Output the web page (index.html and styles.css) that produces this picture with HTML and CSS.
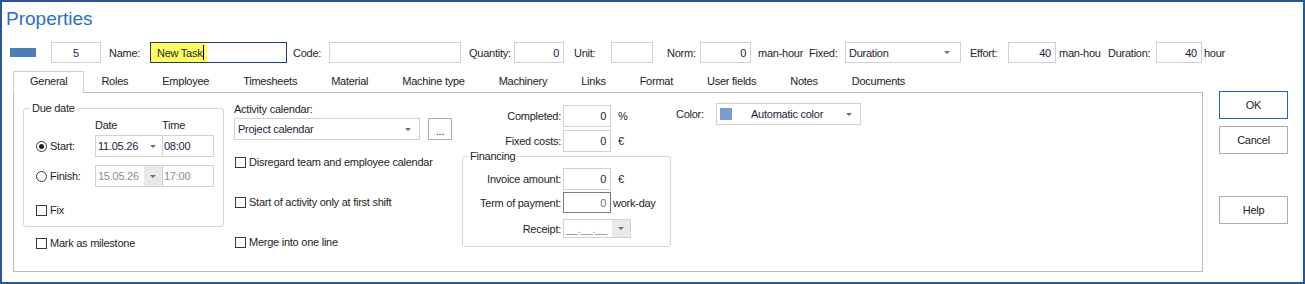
FILE: index.html
```html
<!DOCTYPE html>
<html lang="en">
  <head>
    <meta charset="UTF-8" />
    <title>Properties</title>
    <link rel="stylesheet" href="styles.css">
  </head>
  <body>
    <div class="window">
      <h1 class="title">Properties</h1>

      <!-- Header fields -->
      <div class="toprow">
        <span class="chip"></span>
        <div class="field num-box">5</div>
        <span class="lbl lbl-name">Name:</span>
        <div class="field name-box">
          <span class="selection">New Task<span class="caret"></span></span>
        </div>
        <span class="lbl lbl-code">Code:</span>
        <div class="field code-box"></div>
        <span class="lbl lbl-qty">Quantity:</span>
        <div class="field num qty-box">0</div>
        <span class="lbl lbl-unit">Unit:</span>
        <div class="field unit-box"></div>
        <span class="lbl lbl-norm">Norm:</span>
        <div class="field num norm-box">0</div>
        <span class="lbl lbl-manhour">man-hour</span>
        <span class="lbl lbl-fixed">Fixed:</span>
        <div class="field combo fixed-box">Duration<span class="arrow"></span></div>
        <span class="lbl lbl-effort">Effort:</span>
        <div class="field num effort-box">40</div>
        <span class="lbl lbl-manhou">man-hou</span>
        <span class="lbl lbl-duration">Duration:</span>
        <div class="field num dur-box">40</div>
        <span class="lbl lbl-hour">hour</span>
      </div>

      <div class="main">
        <div class="tabs-area">
          <div class="tabs">
            <span class="tab active">General</span>
            <span class="tab">Roles</span>
            <span class="tab">Employee</span>
            <span class="tab">Timesheets</span>
            <span class="tab">Material</span>
            <span class="tab">Machine type</span>
            <span class="tab">Machinery</span>
            <span class="tab">Links</span>
            <span class="tab">Format</span>
            <span class="tab">User fields</span>
            <span class="tab">Notes</span>
            <span class="tab">Documents</span>
          </div>

          <div class="panel">
            <!-- Due date -->
            <div class="col-due">
              <fieldset class="group due-group">
                <legend>Due date</legend>
                <div class="due-head"><span>Date</span><span>Time</span></div>
                <div class="due-row row-start">
                  <span class="radio-lbl"><span class="radio on"></span>Start:</span>
                  <div class="field date-box">11.05.26<span class="drop"><span class="arrow"></span></span></div>
                  <div class="field time-box">08:00</div>
                </div>
                <div class="due-row row-finish disabled">
                  <span class="radio-lbl"><span class="radio"></span>Finish:</span>
                  <div class="field date-box">15.05.26<span class="drop grey"><span class="arrow"></span></span></div>
                  <div class="field time-box">17:00</div>
                </div>
                <div class="check-row fix-row"><span class="check"></span>Fix</div>
              </fieldset>
              <div class="check-row milestone-row"><span class="check"></span>Mark as milestone</div>
            </div>

            <!-- Calendar -->
            <div class="col-cal">
              <div class="cal-title">Activity calendar:</div>
              <div class="cal-row">
                <div class="field combo cal-box">Project calendar<span class="arrow"></span></div>
                <span class="dots">...</span>
              </div>
              <div class="check-row cal-check first"><span class="check"></span>Disregard team and employee calendar</div>
              <div class="check-row cal-check"><span class="check"></span>Start of activity only at first shift</div>
              <div class="check-row cal-check"><span class="check"></span>Merge into one line</div>
            </div>

            <!-- Progress and financing -->
            <div class="col-fin">
              <div class="frow">
                <span class="flbl">Completed:</span>
                <div class="field num">0</div>
                <span class="unit">%</span>
              </div>
              <div class="frow row-costs">
                <span class="flbl">Fixed costs:</span>
                <div class="field num">0</div>
                <span class="unit">€</span>
              </div>
              <fieldset class="group fin-group">
                <legend>Financing</legend>
                <div class="frow row-invoice">
                  <span class="flbl">Invoice amount:</span>
                  <div class="field num">0</div>
                  <span class="unit">€</span>
                </div>
                <div class="frow row-term">
                  <span class="flbl">Term of payment:</span>
                  <div class="field num term-box">0</div>
                  <span class="unit unit-tight">work-day</span>
                </div>
                <div class="frow row-receipt">
                  <span class="flbl">Receipt:</span>
                  <div class="field receipt-box">__.__.__<span class="drop grey"><span class="arrow"></span></span></div>
                </div>
              </fieldset>
            </div>

            <!-- Colour -->
            <div class="col-color">
              <span class="color-lbl">Color:</span>
              <div class="field color-box">
                <span class="swatch"></span>
                <span class="color-name">Automatic color</span>
                <span class="arrow"></span>
              </div>
            </div>
          </div>
        </div>

        <div class="buttons">
          <button type="button" class="btn btn-default">OK</button>
          <button type="button" class="btn">Cancel</button>
          <button type="button" class="btn btn-help">Help</button>
        </div>
      </div>
    </div>
  </body>
</html>
```

FILE: styles.css
```css
body {
  margin: 0;
  font-family: "Liberation Sans", Arial, sans-serif;
  font-size: 11px;
  letter-spacing: -0.25px;
  color: #1e1e1e;
  background: #fff;
}
.window {
  box-sizing: border-box;
  width: 1305px;
  height: 284px;
  border: 2px solid #2b579a;
}
.title {
  margin: 0;
  padding: 6px 0 0 4px;
  height: 22px;
  font-size: 19px;
  font-weight: normal;
  line-height: 22px;
  letter-spacing: 0;
  color: #2a6fcf;
}

/* generic controls */
.field {
  box-sizing: border-box;
  height: 21px;
  border: 1px solid #d1d1d1;
  background: #fff;
  display: flex;
  align-items: center;
  padding: 0 3px;
  color: #1c1c3c;
  white-space: nowrap;
  overflow: hidden;
}
.num {
  justify-content: flex-end;
  padding-right: 4px;
}
.combo {
  justify-content: space-between;
  padding: 0 8px 0 3px;
}
.arrow {
  width: 0;
  height: 0;
  border-left: 3px solid transparent;
  border-right: 3px solid transparent;
  border-top: 3px solid #707070;
}
.drop {
  display: flex;
  align-items: center;
  justify-content: center;
  width: 18px;
  height: 100%;
  margin-left: auto;
}
.drop.grey {
  background: #e9e9e9;
}
.lbl {
  box-sizing: border-box;
  white-space: nowrap;
}
.check {
  box-sizing: border-box;
  width: 11px;
  height: 11px;
  border: 1px solid #3a3a3a;
  background: #fff;
}
.check-row {
  display: flex;
  align-items: center;
  gap: 3px;
  height: 13px;
  line-height: 13px;
}

/* top row */
.toprow {
  display: flex;
  align-items: center;
  height: 21px;
  margin-top: 12px;
  padding-left: 8px;
}
.chip {
  width: 26px;
  height: 9px;
  background: #4a7ebb;
}
.num-box {
  width: 50px;
  margin-left: 15px;
  justify-content: center;
}
.lbl-name {
  width: 49px;
  padding-left: 8px;
}
.name-box {
  width: 137px;
  padding: 0;
  border-color: #1f3c70;
}
.selection {
  display: flex;
  align-items: center;
  height: 100%;
  padding: 0 3px 0 6px;
  background: #ffff5e;
}
.caret {
  width: 1px;
  height: 15px;
  margin-left: 1px;
  background: #000;
}
.lbl-code {
  width: 42px;
  padding-left: 6px;
}
.code-box {
  width: 132px;
}
.lbl-qty {
  width: 53px;
  padding-left: 8px;
}
.qty-box {
  width: 50px;
}
.lbl-unit {
  width: 47px;
  padding-left: 10px;
}
.unit-box {
  width: 42px;
}
.lbl-norm {
  width: 47px;
  padding-left: 14px;
}
.norm-box {
  width: 51px;
}
.lbl-manhour {
  width: 58px;
  padding-left: 7px;
}
.lbl-fixed {
  width: 36px;
}
.fixed-box {
  width: 116px;
  padding-right: 10px;
}
.lbl-effort {
  width: 47px;
  padding-left: 9px;
}
.effort-box {
  width: 48px;
}
.lbl-manhou {
  width: 52px;
  padding-left: 3px;
}
.lbl-duration {
  width: 48px;
}
.dur-box {
  width: 46px;
}
.lbl-hour {
  padding-left: 2px;
}

/* tabs */
.main {
  display: flex;
  align-items: flex-start;
  margin-top: 8px;
  padding-left: 11px;
}
.tabs-area {
  width: 1190px;
}
.tabs {
  display: flex;
  align-items: flex-start;
  height: 21px;
}
.tab {
  box-sizing: border-box;
  height: 21px;
  padding: 0 16px;
  line-height: 19px;
  border: 1px solid transparent;
  border-bottom: none;
  color: #222;
  white-space: nowrap;
}
.tab.active {
  position: relative;
  z-index: 1;
  height: 22px;
  background: #fff;
  border-color: #cfcfcf;
}
.panel {
  box-sizing: border-box;
  height: 180px;
  border: 1px solid #b8b8b8;
  display: flex;
  align-items: flex-start;
}

/* group boxes */
.group {
  box-sizing: border-box;
  min-width: 0;
  margin: 0;
  padding: 0;
  border: 1px solid #d6d6d6;
  border-radius: 3px;
}
.group legend {
  padding: 0 2px;
  line-height: 11px;
}

/* due date column */
.col-due {
  width: 201px;
  margin: 10px 0 0 9px;
}
.due-group {
  padding-bottom: 9px;
}
.due-group legend {
  margin-left: 6px;
}
.due-head {
  display: flex;
  margin-top: 5px;
  padding-left: 71px;
  line-height: 13px;
}
.due-head span:first-child {
  width: 67px;
}
.due-row {
  display: flex;
  align-items: center;
  height: 22px;
}
.row-start {
  margin-top: 3px;
}
.row-finish {
  margin-top: 8px;
}
.radio-lbl {
  box-sizing: border-box;
  display: flex;
  align-items: center;
  gap: 3px;
  width: 71px;
  padding-left: 12px;
}
.radio {
  box-sizing: border-box;
  display: flex;
  align-items: center;
  justify-content: center;
  width: 11px;
  height: 11px;
  border: 1px solid #3a3a3a;
  border-radius: 50%;
}
.radio.on::after {
  content: "";
  width: 5px;
  height: 5px;
  border-radius: 50%;
  background: #1e1e1e;
}
.date-box {
  width: 68px;
  height: 22px;
  padding: 0 0 0 2px;
}
.time-box {
  width: 51px;
  height: 22px;
  border-left: none;
  padding-left: 1px;
}
.disabled .field {
  color: #8d8d8d;
}
.fix-row {
  margin-top: 17px;
  padding-left: 12px;
}
.milestone-row {
  margin-top: 10px;
  padding-left: 13px;
}

/* calendar column */
.col-cal {
  width: 218px;
  margin: 10px 0 0 10px;
}
.cal-title {
  line-height: 13px;
}
.cal-row {
  display: flex;
  margin-top: 2px;
}
.cal-box {
  width: 186px;
  height: 22px;
}
.dots {
  box-sizing: border-box;
  width: 24px;
  height: 22px;
  margin-left: 8px;
  border: 1px solid #adadad;
  text-align: center;
  line-height: 24px;
}
.cal-check {
  margin-top: 27px;
  padding-left: 1px;
}
.cal-check.first {
  margin-top: 16px;
}

/* completed / financing column */
.col-fin {
  width: 209px;
  margin: 12px 0 0 10px;
}
.frow {
  display: flex;
  align-items: center;
  height: 22px;
}
.flbl {
  box-sizing: border-box;
  width: 101px;
  padding-right: 2px;
  text-align: right;
  white-space: nowrap;
}
.frow .field {
  width: 48px;
  height: 22px;
}
.unit {
  margin-left: 7px;
}
.unit-tight {
  margin-left: 2px;
}
.row-costs {
  margin-top: 3px;
}
.fin-group {
  margin-top: -1px;
  padding-bottom: 8px;
}
.fin-group legend {
  margin-left: 5px;
}
.fin-group .flbl {
  width: 100px;
}
.row-invoice {
  margin-top: 6px;
}
.row-term {
  margin-top: 2px;
  height: 21px;
}
.frow .term-box {
  height: 21px;
  border-color: #7a7a7a;
  color: #777;
}
.row-receipt {
  margin-top: 6px;
  height: 19px;
}
.frow .receipt-box {
  width: 68px;
  height: 19px;
  padding: 0 0 0 2px;
  color: #8d8d8d;
}

/* colour column */
.col-color {
  display: flex;
  align-items: center;
  margin: 10px 0 0 5px;
}
.color-lbl {
  width: 40px;
}
.color-box {
  width: 145px;
  height: 22px;
  padding: 0 8px 0 3px;
}
.swatch {
  width: 12px;
  height: 12px;
  background: #7b9ccf;
}
.color-name {
  margin-left: 19px;
}
.color-box .arrow {
  margin-left: auto;
}

/* dialog buttons */
.buttons {
  display: flex;
  flex-direction: column;
  margin: 20px 0 0 16px;
}
.btn {
  box-sizing: border-box;
  width: 69px;
  height: 28px;
  padding: 0;
  border: 1px solid #adadad;
  background: #fff;
  font: inherit;
  letter-spacing: inherit;
  color: #222;
}
.btn + .btn {
  margin-top: 7px;
}
.buttons .btn-help {
  margin-top: 42px;
}
.btn-default {
  border-color: #2463c4;
}
```
